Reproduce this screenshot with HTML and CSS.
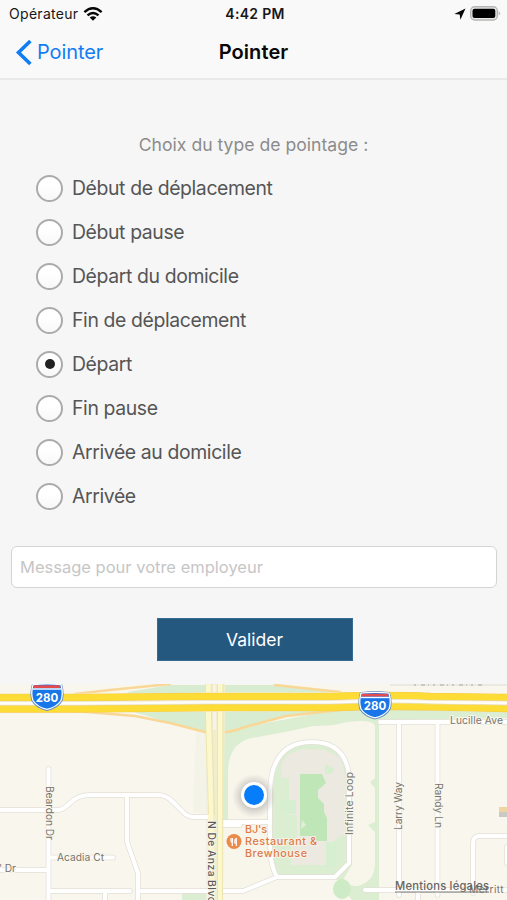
FILE: index.html
```html
<!DOCTYPE html>
<html lang="fr">
<head>
<meta charset="utf-8">
<title>Pointer</title>
<link rel="stylesheet" href="styles.css">
</head>
<body>
<div class="screen">
  <header class="header">
    <div class="status">
      <div class="carrier"><span>Opérateur</span>
        <svg width="20" height="14" viewBox="0 0 20 14"><g fill="none" stroke="#080808" stroke-width="2.5"><path d="M1.4 5.1Q10-2.5 18.6 5.1"/><path d="M4.5 8.4Q10 3.6 15.500 8.4"/></g><path d="M6.700 10.500Q10 7.800 13.300 10.500L10 13.800Z" fill="#080808"/></svg>
      </div>
      <div class="time">4:42 PM</div>
      <div class="indicators">
        <svg width="12" height="12" viewBox="0 0 12 12"><path d="M.3 6 11.500.5 6.400 11.800 5.700 6.400Z" fill="#080808"/></svg>
        <svg width="31" height="15" viewBox="0 0 31 15"><rect x=".7" y=".7" width="26.600" height="13.300" rx="4" fill="#e9e9e8" stroke="#b5b5b3" stroke-width="1.400"/><rect x="2.500" y="2.700" width="22.800" height="9.400" rx="2" fill="#000"/><path d="M28.600 5Q31.500 7.300 28.600 9.600Z" fill="#b5b5b3"/></svg>
      </div>
    </div>
    <nav class="navbar">
      <a class="back"><svg width="18" height="27" viewBox="0 0 18 27"><path d="M16.400 2 4.500 13.500 16.400 25" fill="none" stroke="#117df4" stroke-width="3.600"/></svg><span>Pointer</span></a>
      <h1 class="title">Pointer</h1>
      <span></span>
    </nav>
  </header>
  <main class="form">
    <p class="caption">Choix du type de pointage :</p>
    <div class="choices">
      <label class="choice"><i class="radio"></i><span>Début de déplacement</span></label>
      <label class="choice"><i class="radio"></i><span>Début pause</span></label>
      <label class="choice"><i class="radio"></i><span>Départ du domicile</span></label>
      <label class="choice"><i class="radio"></i><span>Fin de déplacement</span></label>
      <label class="choice"><i class="radio checked"></i><span>Départ</span></label>
      <label class="choice"><i class="radio"></i><span>Fin pause</span></label>
      <label class="choice"><i class="radio"></i><span>Arrivée au domicile</span></label>
      <label class="choice"><i class="radio"></i><span>Arrivée</span></label>
    </div>
    <input class="message" placeholder="Message pour votre employeur">
    <button class="submit">Valider</button>
  </main>
  <svg class="map" viewBox="0 684 507 216" width="507" height="216">
    <defs>
      <radialGradient id="halo"><stop offset=".5" stop-color="#777" stop-opacity=".4"/><stop offset="1" stop-color="#999" stop-opacity="0"/></radialGradient>
      <g id="shield"><path d="M-14.500-12Q0-14 14.500-12Q17.500-2 15 5Q11 12 0 14.500Q-11 12-15 5Q-17.500-2-14.500-12Z" fill="#2878d6" stroke="#6f8fb8" stroke-width="1"/><path d="M-14-11.300Q0-13 14-11.300Q16.500-2 14 4.500Q10 11 0 13.300Q-10 11-14 4.500Q-16.500-2-14-11.300Z" fill="#1976e8" stroke="#fff" stroke-width="1.300"/><path d="M-13-10.800H13L13.500-8H-13.500Z" fill="#e34b4f"/><path d="M-14.300-7H14.300" stroke="#fff" stroke-width="1.400"/></g>
      <path id="streets" d="M48.500 769V900M0 810H58Q63 810 70 803Q78 795 90 795H158Q166 795 172 801L182 811Q187 817 194 817H211M127 796V842L138 873V900M50 857.500H113M0 870H48M50 891H130M138 891H207M105 892V900M220 822H270M220 825H240M222 891H243L277 877H335L349 863V775Q345 742 312 742Q272 742 270 790V845Q270 865 277 877M380 722H507M399 724V895M437.500 724V895M365 890H507M418 900V893M473 893V843Q473 836 480 836H507M507 847V863"/>
    </defs>
    <rect y="684" width="507" height="216" fill="#f9f6ee"/>
    <path d="M206 712H219V900H206Z" fill="#eff1e3"/>
    <path d="M128 692 170 685H275L340 693V712L290 716 245 727 214 733 170 723 134 712Z" fill="#d7ecd0"/>
    <path d="M220 730 245 727 340 709H507V718L379 720V900H352L336 882H276L270 828V820H222Z" fill="#dceed2"/>
    <path d="M196 731H206V814L193 812Z" fill="#f4f3e8"/>
    <path d="M222 820H228V770Q229 743 252 738L290 731 313 726Q335 726 342 723Q372 718 375 726V778L370 782 375 788V822L368 825 375 832V861Q376 881 358 886Q344 886 344 878L352 865V784Q347 743 312 742Q281 741 272 775V820Z" fill="#f8f5eb"/>
    <path d="M222 822H270V860L277 877 243 892H222Z" fill="#f8f5eb"/>
    <path d="M222 893H245L277 879H336L349 892V900H222Z" fill="#f9f6ee"/>
    <ellipse cx="342" cy="889" rx="9" ry="10" fill="#cdebc5"/>
    <path d="M182 893H206V900H182Z" fill="#dceed2"/>
    <path d="M282 762 289 754 303 749 325 750 341 758 346 780V833L334 840 334 857 326 865H291V841H297V815H289V778H281Z" fill="#ebe9e0"/>
    <path d="M300 774H322L326 783 318 790V798L324 804V812L327 818V841H316V836H300Z" fill="#bfe6b7"/>
    <path d="M281 800H296V814H281ZM325 764 335 769 330 774H325ZM326 842H337V867H326Z" fill="#d7efd1"/>
    <path d="M302 820 306 825 301 829Z" fill="#e4eedb"/>
    <g fill="none" stroke-linecap="round" stroke-linejoin="round">
      <use href="#streets" stroke="#e3e0d8" stroke-width="5.500"/>
      <use href="#streets" stroke="#fff" stroke-width="4"/>
      <path d="M75 694 110 690 170 684M75 711 135 716 170 723 205 732Q225 735 245 727L286 716 340 710M275 685 340 692" stroke="#f8d797" stroke-width="2.500"/>
    </g>
    <path d="M205 684H225V715L222 900H212L206 715Z" fill="#f1edcd"/>
    <path d="M205.500 684H211.500V718L214.500 900H210L205.500 718ZM217.500 684H223L222.500 900H217.500Z" fill="#fcf8cb"/>
    <path d="M205.500 684V718L208.500 814M223 684 222.500 900M211.500 684V715L214.500 815M217.500 684V900" fill="none" stroke="#eadfaa" stroke-width=".8"/>
    <path d="M214.500 685V730" stroke="#f7f2ee" stroke-width="3"/>
    <path d="M0 693.500Q110 694 210 692.500H330Q390 690 430 693L507 693.500V712L450 711Q400 708 340 711L210 711.500 0 713Z" fill="#fff"/>
    <path d="M0 697.500H80L200 696.500H330Q390 694.500 430 696.500L507 697.500M0 709H80L220 707.500H330Q390 705.500 440 707L507 708.500" fill="none" stroke="#f4c84c" stroke-width="7.600"/>
    <path d="M0 697.500H80L200 696.500H330Q390 694.500 430 696.500L507 697.500M0 709H80L220 707.500H330Q390 705.500 440 707L507 708.500" fill="none" stroke="#fcdc35" stroke-width="6.500"/>
    <path d="M0 703.300H80L210 702.200H330Q390 700 430 702L507 703" fill="none" stroke="#fffdf8" stroke-width="3.500"/>
    <path d="M0 701.500H80L210 700.500H330Q390 698.300 430 700.300L507 701M0 705.200H80L210 704H330Q390 702 430 704L507 705" fill="none" stroke="#e6dec9" stroke-width=".7"/>
    <use href="#shield" x="47" y="696"/>
    <use href="#shield" x="375" y="704.500"/>
    <g class="route"><text x="47" y="701.500">280</text><text x="375" y="710">280</text></g>
    <path d="M390 685H507" stroke="#e7e4df" stroke-width="1.500"/>
    <path d="M414 685H482" stroke="#aaa8a5" stroke-width="1" stroke-dasharray="2 5 4 3 1 4"/>
    <rect x="499" y="807" width="8" height="5" fill="#f0d5a4"/><rect x="499" y="812" width="8" height="5" fill="#c9cac5"/>
    <g class="street">
      <text x="450" y="724" textLength="53">Lucille Ave</text>
      <text x="57" y="860.500" textLength="47">Acadia Ct</text>
      <text x="-1" y="872" textLength="17">' Dr</text>
      <text transform="translate(45.500 786)rotate(90)" textLength="54">Beardon Dr</text>
      <text transform="translate(353 835)rotate(-90)" textLength="63">Infinite Loop</text>
      <text transform="translate(402 830)rotate(-90)" textLength="48">Larry Way</text>
      <text transform="translate(434.500 783)rotate(90)" textLength="45">Randy Ln</text>
      <text class="major" transform="translate(208 821)rotate(90)" textLength="82">N De Anza Blvd</text>
      <text x="469" y="892.500" textLength="50">Merritt Dr</text>
    </g>
    <circle cx="234" cy="841.500" r="7.500" fill="#ec8a49"/>
    <path d="M231 838V841Q231 842.500 232.300 842.500V846M232.500 838V842M236.300 846V838.500Q234.600 839 234.800 843H236.300" fill="none" stroke="#fff" stroke-width="1.200"/>
    <g class="place"><text x="245" y="832.500" textLength="22">BJ's</text><text x="245" y="845" textLength="72">Restaurant &amp;</text><text x="245" y="857" textLength="62">Brewhouse</text></g>
    <circle cx="254" cy="796" r="22" fill="url(#halo)"/>
    <circle cx="254" cy="795" r="13" fill="#fff"/><circle cx="254" cy="795" r="10" fill="#087dfa"/>
    <text class="legal" x="395" y="890" textLength="94">Mentions légales</text>
    <path d="M395 892H489" stroke="#777673" stroke-width="1"/>
  </svg>
</div>
</body>
</html>
```

FILE: styles.css
```css
* { box-sizing: border-box; }
body { margin: 0; background: #f6f6f6; font-family: Inter, "Liberation Sans", sans-serif; }
.screen { width: 507px; height: 900px; display: flex; flex-direction: column; overflow: hidden; }
.header { height: 80px; background: #f9f9f9; border-bottom: 2px solid #e9e9e9; }
.status { height: 27px; display: grid; grid-template-columns: 1fr auto 1fr; align-items: center; padding: 0 6px 0 9px; font-size: 14px; color: #171717; }
.carrier { display: flex; align-items: center; gap: 5px; letter-spacing: .3px; }
.time { font-weight: 600; letter-spacing: .3px; }
.indicators { display: flex; justify-content: flex-end; align-items: center; gap: 4px; }
.navbar { height: 50px; display: grid; grid-template-columns: 1fr auto 1fr; align-items: center; padding: 0 14px; }
.back { display: flex; align-items: center; gap: 5px; color: #117df4; font-size: 20px; letter-spacing: -.1px; }
.title { margin: 0; font-size: 20px; font-weight: 600; letter-spacing: .1px; color: #080808; }
.form { height: 604px; padding: 53px 10px 0; display: flex; flex-direction: column; align-items: center; }
.caption { margin: 0; height: 24px; line-height: 24px; font-size: 17.600px; color: #8c8c8c; }
.choices { align-self: stretch; margin-top: 9px; padding-left: 26px; }
.choice { height: 44px; display: flex; align-items: center; gap: 9px; font-size: 19.400px; letter-spacing: -.38px; color: #555; }
.radio { width: 27px; height: 27px; border: 2px solid #ababab; border-radius: 50%; background: linear-gradient(#fff 40%, #f7f7f7); display: flex; align-items: center; justify-content: center; }
.checked::after { content: ""; width: 10px; height: 10px; border-radius: 50%; background: #222; }
.message { align-self: stretch; flex: none; height: 42px; margin: 28px 0 0 1px; padding: 0 8px 1px; border: 1.500px solid #d4d4d4; border-radius: 6px; background: #fff; font: 16.500px Inter, sans-serif; }
.message::placeholder { color: #c6c6c6; opacity: 1; }
.submit { width: 196px; height: 43px; margin: 30px 0 0 2px; border: 1px solid #376a90; background: #24587f; color: #fff; font: 17.500px Inter, sans-serif; }
.map { display: block; flex: none; font-family: Inter, sans-serif; }
.route { font-size: 11.500px; font-weight: 700; fill: #fff; text-anchor: middle; }
.street { font-size: 10.300px; fill: #77766f; stroke: #f9f6ee; stroke-width: 2px; paint-order: stroke; }
.major { fill: #5e5d59; font-weight: 500; }
.place { font-size: 10.800px; font-weight: 500; fill: #dd7b48; stroke: #fbf5ec; stroke-width: 1.500px; paint-order: stroke; }
.legal { font-size: 11.200px; font-weight: 500; fill: #666562; }
```
